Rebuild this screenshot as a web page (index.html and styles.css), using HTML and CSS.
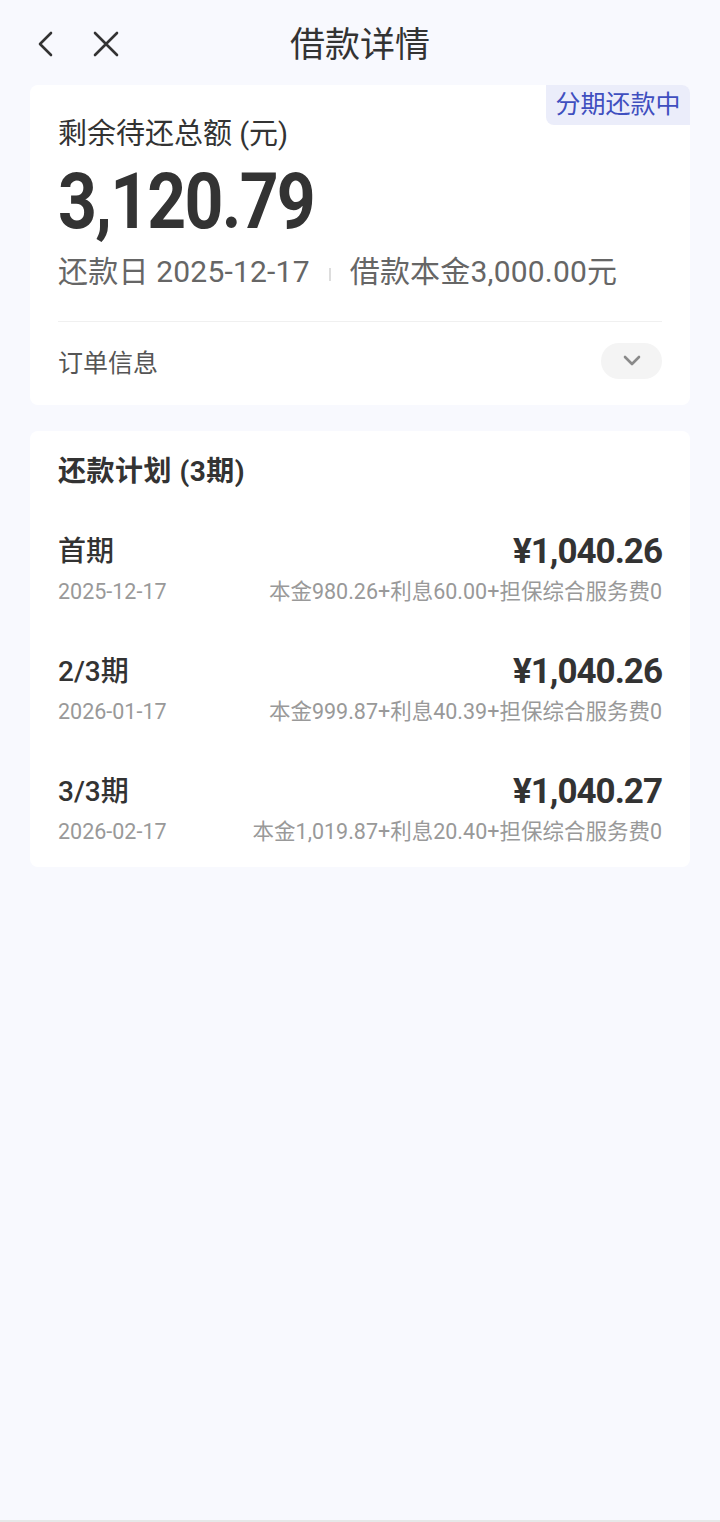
FILE: index.html
```html
<!DOCTYPE html>
<html>
<head>
    <title>借款详情</title>
    <link rel="stylesheet" href="styles.css">
</head>
<body>
    <div class="page">
        <div class="nav">
            <div class="nav-icons">
                <svg class="icon-back" width="20" height="28" viewBox="0 0 20 28">
                    <path d="M15 3 L4 14 L15 25" fill="none" stroke="#333" stroke-width="2.6" stroke-linecap="round" stroke-linejoin="round"/>
                </svg>
                <svg class="icon-close" width="28" height="28" viewBox="0 0 28 28">
                    <path d="M3 3 L25 25 M25 3 L3 25" fill="none" stroke="#333" stroke-width="2.6" stroke-linecap="round"/>
                </svg>
            </div>
            <div class="nav-title">借款详情</div>
        </div>

        <div class="card summary">
            <div class="badge">分期还款中</div>
            <div class="label">剩余待还总额 (元)</div>
            <div class="amount"><span>3,120.79</span></div>
            <div class="meta">
                <span>还款日 2025-12-17</span>
                <span class="sep"></span>
                <span>借款本金3,000.00元</span>
            </div>
            <div class="order-row">
                <span>订单信息</span>
                <span class="toggle">
                    <svg width="20" height="12" viewBox="0 0 20 12">
                        <path d="M3 2 L10 9 L17 2" fill="none" stroke="#8a8a8a" stroke-width="2.6" stroke-linecap="round" stroke-linejoin="round"/>
                    </svg>
                </span>
            </div>
        </div>

        <div class="card plan">
            <div class="plan-title">还款计划 (3期)</div>
            <div class="plan-list">
                <div class="plan-item">
                    <div class="line">
                        <span class="term">首期</span>
                        <span class="money">¥1,040.26</span>
                    </div>
                    <div class="line sub">
                        <span>2025-12-17</span>
                        <span>本金980.26+利息60.00+担保综合服务费0</span>
                    </div>
                </div>
                <div class="plan-item">
                    <div class="line">
                        <span class="term">2/3期</span>
                        <span class="money">¥1,040.26</span>
                    </div>
                    <div class="line sub">
                        <span>2026-01-17</span>
                        <span>本金999.87+利息40.39+担保综合服务费0</span>
                    </div>
                </div>
                <div class="plan-item">
                    <div class="line">
                        <span class="term">3/3期</span>
                        <span class="money">¥1,040.27</span>
                    </div>
                    <div class="line sub">
                        <span>2026-02-17</span>
                        <span>本金1,019.87+利息20.40+担保综合服务费0</span>
                    </div>
                </div>
            </div>
        </div>
    </div>
</body>
</html>
```

FILE: styles.css
```css
html, body {
    margin: 0;
    padding: 0;
}
body {
    font-family: Roboto, "Noto Sans CJK SC", sans-serif;
    background-color: #f8f9fe;
    color: #333;
}
.page {
    height: 1522px;
    border-bottom: 2px solid #e6e8e8;
    box-sizing: border-box;
}
.nav {
    position: relative;
    height: 85px;
    display: flex;
    align-items: center;
    justify-content: center;
}
.nav-icons {
    position: absolute;
    left: 36px;
    top: 30px;
    display: flex;
    align-items: center;
    gap: 36px;
}
.nav-title {
    margin-top: 6px;
    font-size: 35px;
    line-height: 48px;
    color: #333;
}
.card {
    position: relative;
    margin: 0 30px;
    background: #fff;
    border-radius: 8px;
    padding: 0 28px;
}
.summary {
    padding-top: 31px;
}
.badge {
    position: absolute;
    top: 0;
    right: 0;
    width: 144px;
    height: 40px;
    line-height: 40px;
    text-align: center;
    font-size: 25px;
    color: #3f4fbf;
    background: #ebedfa;
    border-radius: 0 8px 0 8px;
}
.label {
    font-size: 29px;
    line-height: 36px;
    color: #333;
}
.amount {
    margin-top: 6px;
    font-size: 78px;
    line-height: 88px;
    font-weight: 700;
    color: #333;
}
.amount span {
    display: inline-block;
    letter-spacing: -2px;
    transform: scaleX(0.87);
    transform-origin: left center;
}
.meta {
    margin-top: 6px;
    display: flex;
    align-items: center;
    font-size: 30px;
    line-height: 40px;
    letter-spacing: 0.2px;
    color: #666;
}
.sep {
    width: 2px;
    height: 13px;
    background: #ddd;
    margin: 4px 19px 0 19px;
}
.order-row {
    margin-top: 29px;
    border-top: 1px solid #f0f0f0;
    height: 84px;
    padding-bottom: 6px;
    box-sizing: border-box;
    display: flex;
    align-items: center;
    justify-content: space-between;
    font-size: 25px;
    color: #555;
}
.toggle {
    width: 61px;
    height: 36px;
    border-radius: 18px;
    background: #f4f4f4;
    display: flex;
    align-items: center;
    justify-content: center;
}
.plan {
    margin-top: 26px;
    padding-top: 23px;
    padding-bottom: 21px;
}
.plan-title {
    font-size: 28px;
    line-height: 36px;
    font-weight: 700;
    letter-spacing: 0.5px;
}
.plan-list {
    margin-top: 44px;
    display: flex;
    flex-direction: column;
    gap: 48px;
}
.line {
    display: flex;
    justify-content: space-between;
    align-items: center;
}
.term {
    font-size: 28px;
    line-height: 36px;
    font-weight: 500;
}
.money {
    font-size: 35px;
    line-height: 36px;
    font-weight: 700;
    letter-spacing: -1px;
}
.sub {
    margin-top: 8px;
    font-size: 21.5px;
    line-height: 28px;
    color: #999;
}
```
